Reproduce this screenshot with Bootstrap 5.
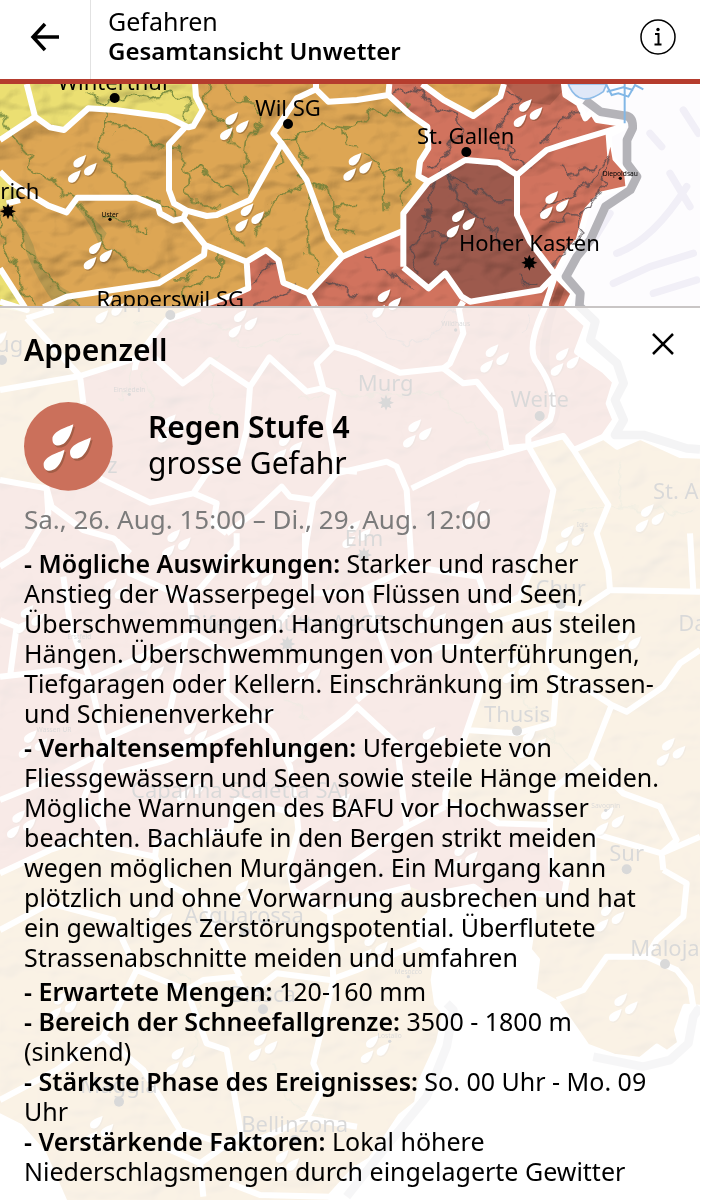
<!DOCTYPE html>
<html lang="de">
<head>
<meta charset="utf-8">
<meta name="viewport" content="width=device-width, initial-scale=1">
<title>Gesamtansicht Unwetter</title>
<link href="https://cdn.jsdelivr.net/npm/bootstrap@5.3.0/dist/css/bootstrap.min.css" rel="stylesheet">
<style>
  body { font-family: "Noto Sans", "Open Sans", sans-serif; color: #000; background: #fff; font-size: 25px; line-height: 30px; }
  .app { margin-right: 13px; }
  .app-head { height: 84px; border-bottom: 5px solid #b53c2e; background: #fff; }
  .back { width: 91px; border-right: 1px solid #e2e2e2 !important; padding-bottom: 5px !important; }
  .head-title { padding: 6px 0 0 17px; }
  .head-title .strong-text { font-size: 24px; }
  .strong-text { font-weight: 600; }
  .icon-btn { background: none; border: 0; border-radius: 0; color: #000; padding: 0; line-height: 1; }
  .info { margin-right: 24px; padding-bottom: 5px; }
  .map { top: 0; left: 0; }
  .sheet { margin-top: 222px; padding: 21px 24px 0; background: rgba(255,255,255,.85); border-top: 2px solid #c9c5c5; }
  .sheet-title { font-size: 30px; line-height: 42px; font-weight: 600; margin: 0; }
  .level { margin-top: 31px; gap: 35px; }
  .level-icon { width: 89px; height: 89px; flex: none; }
  .level-text { font-size: 30px; line-height: 36px; padding-top: 7px; }
  .period { color: #7b7b7b; font-size: 26px; margin: 13px 0 14px; }
  .facts p { margin: 0; }
  .facts .long { margin-bottom: 4px; }
</style>
</head>
<body>
<div class="app d-flex flex-column min-vh-100">
  <header class="app-head d-flex align-items-stretch">
    <button class="back icon-btn d-flex align-items-center justify-content-center" type="button" aria-label="Zurück">
      <svg width="30" height="30" viewBox="0 0 30 30" fill="none" stroke="#000" stroke-width="3.500"><path d="M29 15H3M15 2L3 15l12 13"/></svg>
    </button>
    <div class="head-title flex-grow-1">
      <div>Gefahren</div>
      <div class="strong-text">Gesamtansicht Unwetter</div>
    </div>
    <button class="info icon-btn align-self-center" type="button" aria-label="Information">
      <svg width="36" height="36" viewBox="0 0 36 36" fill="none" stroke="#000"><circle cx="18" cy="18" r="17" stroke-width="1.500"/><path d="M15 15h3.500v10M14.500 25.500h7" stroke-width="2"/><circle cx="18" cy="10.500" r="1.700" fill="#000" stroke="none"/></svg>
    </button>
  </header>

  <main class="position-relative flex-grow-1 d-flex flex-column overflow-hidden">
    <svg class="map position-absolute w-100 h-100" viewBox="0 252 2100 3348" preserveAspectRatio="xMinYMin slice" aria-label="Karte der Unwettergefahren">
      <defs>
        <path id="drop" d="M0 0C-10 5-38 12-38 27C-38 42-22 40-15 33C-6 25-2 10 0 0Z"/>
        <g id="rain"><g fill="#5a3a20" opacity=".35"><use href="#drop" x="3" y="4"/><use href="#drop" x="35" y="28"/><use href="#drop" x="-13" y="50"/></g><g fill="#fff"><use href="#drop"/><use href="#drop" x="32" y="24"/><use href="#drop" x="-16" y="46"/></g></g>
        <path id="star" d="M0-24L5-12 16-17 12-5 24 0 12 5 16 17 5 12 0 24-5 12-16 17-12 5-24 0-12-5-16-17-5-12Z"/>
        <filter id="relief" x="0" y="0" width="100%" height="100%">
          <feTurbulence type="fractalNoise" baseFrequency="0.006 0.009" numOctaves="3" seed="8"/>
          <feDiffuseLighting surfaceScale="45" lighting-color="#fff" diffuseConstant="1.25"><feDistantLight azimuth="225" elevation="54"/></feDiffuseLighting>
        </filter>
        <filter id="meander" filterUnits="userSpaceOnUse" x="0" y="252" width="2100" height="3348">
          <feTurbulence type="fractalNoise" baseFrequency="0.025" numOctaves="2" seed="4"/>
          <feDisplacementMap in="SourceGraphic" scale="50" xChannelSelector="R" yChannelSelector="G"/>
        </filter>
      </defs>

      <!-- warning areas: level 3, 4, 2 and 5 -->
      <rect y="252" width="2100" height="3348" fill="#dda654"/>
      <path fill="#d1735e" d="M1171 252L1175 290 1285 380 1290 440 1250 530 1290 545 1210 640 1205 690 1027 770 925 880 850 850 835 775 795 750 740 785 745 865 600 918 500 950 430 1040 405 1075 240 1125 250 1210V1320L140 1460 0 1440V2610L150 2550 300 2500 320 2550 465 2570 470 2530 690 2490 700 2400 890 2440 900 2480 865 2610 875 2665 980 2740 1071 2700 1231 2660 1291 2685 1421 2660 1511 2740 1571 2680 1691 2690 1711 2650 1671 2630 1651 2480 1491 2470 1336 2420V2380L1401 2190 1456 2050 1411 1940 1471 1850V1830L1561 1790 1631 1620 1661 1470 1581 1340 1681 1310 1721 1350 1811 1310 2100 1310V252Z"/>
      <path fill="#dda654" d="M1266 252L1331 300 1421 350 1501 290 1516 252Z"/>
      <path fill="#b5624f" d="M1516 252L1565 305 1650 315 1690 270V252ZM1650 920L1680 840 1700 850 1670 930Q1620 1080 1680 1200 1690 1280 1620 1310L1600 1310Q1660 1260 1650 1200 1590 1080 1650 920Z"/>
      <path fill="#ebdf72" d="M0 252V420L105 350 190 390 265 325 500 350 565 380 610 330 580 252ZM0 520L60 560 50 600 0 630ZM0 805L90 940 0 925Z"/>
      <path fill="#9d5a4d" d="M1396 480L1495 488 1551 525V645L1590 730 1666 825 1620 875 1410 905 1385 890 1336 820 1286 865 1210 805V640L1280 545Z"/>
      <path fill="#b99a50" d="M225 615Q285 650 320 700L300 740Q280 680 225 615ZM40 640Q95 700 110 770 140 850 240 890L200 920H170Q110 840 80 760 70 700 40 640Z"/>

      <rect y="252" width="2100" height="3348" filter="url(#relief)" opacity=".4" style="mix-blend-mode:multiply"/>

      <!-- land outside the warning regions -->
      <g fill="#fdfcfe" stroke="#fff" stroke-width="18" stroke-linejoin="round">
        <path d="M1691 245L1696 285 1736 310 1756 355 1776 335 1791 360 1871 372 1866 385 1826 405 1831 470 1871 510 1876 560 1806 580 1761 630 1736 720 1701 760 1666 825 1721 880 1701 920 1761 975 1731 1055 1811 1110 1846 1145 1826 1210 1846 1260 1811 1310 1851 1340 1921 1310 2041 1365 2120 1368V245Z"/>
        <path d="M2120 3025L2056 3020 2031 3090 2041 3130 2001 3160 1971 3140 1921 3180 1841 3170 1761 3140 1671 3010 1601 2970 1611 2880 1586 2850 1601 2750 1596 2680 1511 2740 1456 2685 1421 2660 1291 2685V2740L1251 2780 1261 2830 1311 2870 1301 2940 1311 3010 1336 3040 1316 3130 1261 3250 1251 3310 1201 3350 1141 3440 1111 3480 1071 3505 980 3620H2120ZM-20 3340L60 3380 130 3460 200 3620H-20Z"/>
      </g>
      <g fill="none" stroke="#f1eff7" stroke-width="22" stroke-linecap="round">
        <path d="M1950 400L1985 440M2010 520L2070 620M1850 760Q1960 720 2060 560M1840 850L1950 800 2080 760M1960 880L2090 840M2050 330L2095 400M1780 720L1830 640"/>
      </g>
      <path fill="#d1735e" d="M1831 440L1838 480 1872 518 1876 558 1800 575Z"/>
      <g fill="none" stroke="#b4b3b8" stroke-width="26" stroke-linejoin="round">
        <path d="M1755 300L1801 335 1875 347Q1900 350 1898 385L1881 420V490L1911 530 1891 570 1816 620 1771 720 1731 770 1698 830 1741 880 1738 918 1786 965 1771 1020 1851 1090 1871 1150 1845 1200 1871 1260 1845 1305 1931 1305 2060 1345 2100 1348"/>
        <path d="M2100 3020L2080 3050 2065 3130 2010 3180 1930 3200 1780 3170M1340 3010L1360 3030 1340 3140 1280 3290 1150 3450 1040 3590" stroke-opacity=".8"/>
      </g>
      <path fill="#dfe8f8" stroke="#8dbce8" stroke-width="5" d="M1708 260Q1740 325 1810 275L1820 252H1705Z"/>
      <path fill="none" stroke="#82b7e6" stroke-width="6" d="M1874 252V370M1818 252L1835 285 1855 280 1885 290 1905 255 1930 268M1820 275L1870 262 1900 270"/>

      <!-- rivers -->
      <g filter="url(#meander)" fill="none" stroke-linejoin="round" stroke-width="4">
      <g stroke="#5f7a35">
        <path d="M0 340L30 400 95 470 85 510 165 540 190 580 230 600 270 650 305 720 370 770 410 815 440 820 475 835M315 330L310 370 302 450 345 530 400 580 500 610 530 640M312 370L340 375 350 395 385 380 430 400 450 430 500 440M40 640L75 740 130 810 180 870 245 918M0 650L15 740 50 800 70 880 100 918M305 655L380 665 430 710 445 710 430 675M270 275L310 310 345 300 380 285 460 295 510 280 565 300 555 365M630 252L615 310 650 350 690 375 685 430 725 445M675 252L710 300 770 305 775 360 745 430 735 510 750 590M520 440L550 480 565 540 555 570 575 600 650 620M565 510L600 505 630 530 690 560 700 580M845 420L900 400 975 375 1050 385 1071 375M890 400L895 440 915 480 900 520 930 560 920 680 925 760 965 825M765 700L800 640 820 585 870 580 920 540M845 450L850 490 830 515M660 750L660 820 600 850 550 860 545 918M520 840L560 840 590 815M680 650L710 700 725 740M1071 375L1120 330 1190 350 1230 300M1030 385L1045 430 1071 445M935 550L990 570 1000 620 1071 610M1000 620L1010 690 1071 705M1090 460L1145 500 1150 640M1145 510L1210 520 1230 560 1205 600"/>
        <path d="M410 960Q480 990 520 970T640 970 700 1030 900 1000M370 1100Q420 1040 360 1200M430 1110L460 1220M640 1060L630 1230 700 1320M900 1200L1000 1170 1120 1190 1310 1180 1490 1350M1710 1540L1850 1520 2080 1540M1870 1380L1860 1530M1000 1750L880 1900 820 2040 920 2160M1480 1890L1540 2050 1650 2200 1740 2300M520 2900L600 2980 580 3180M820 3200L880 3310 980 3360" opacity=".55"/>
      </g>
      <g stroke="#50474c">
        <path d="M1171 285L1200 265 1270 280 1300 320 1370 350 1380 400 1320 480 1290 500M1480 400L1530 330 1560 300 1520 270M1480 400L1540 470 1600 505M1625 430L1670 380 1690 345 1750 335M1340 520L1380 550 1440 570 1470 600 1540 600M1325 500L1290 570 1275 690 1235 770 1250 825M1345 520L1370 600 1440 650 1490 700 1520 740M1275 705L1340 710 1310 760 1320 790M1820 480L1750 570 1620 640M1830 470L1800 570 1740 640 1735 710 1650 800M1680 490L1700 530 1780 500M1640 670L1700 645 1740 650M1095 760L1110 780 1170 820 1250 865M975 840L1020 870 1071 880M765 850L800 800 830 780M760 920L840 890 900 850M1560 830L1590 860 1620 860"/>
        <path d="M1100 940Q1150 1020 1220 1030T1370 920M1570 1000L1590 930" opacity=".5"/>
      </g>
      </g>

      <!-- region borders -->
      <g fill="none" stroke="#fff" stroke-width="18" stroke-linejoin="round">
        <path d="M80 252L105 350 0 420M105 350L150 382 192 390 265 325 345 330 500 350 565 382 580 378 608 330 588 290 585 252M555 382L507 433V570L522 610 560 632 620 648 650 645 750 600 845 430 820 400 890 295 948 268 985 305 1071 300 1165 285 1168 252M948 252V268M845 430L920 540 985 715 1027 770M0 515L30 545 100 590 145 617 200 637 232 593H410L475 620 480 640 520 662 550 655 560 632M550 655L615 735 612 765 475 850 200 890 130 922M615 735L740 785 745 865 700 885 600 918M740 785L798 750 835 780 850 848 925 880 945 918M925 880L1027 770 1071 750 1210 692M0 805L80 930 0 905M20 610L60 600"/>
        <path d="M1165 285L1225 340 1282 380 1285 445 1260 485 1255 528 1285 545M1266 252L1331 300 1420 348 1501 290 1512 252M1210 800V640L1285 545 1396 480 1495 488 1551 525 1640 450 1700 430 1860 382M1551 525V645L1590 725 1666 825 1622 870 1410 905 1385 890 1336 820 1286 865 1210 802M1390 905L1375 930M1635 918L1666 825"/>
        <path d="M0 1170L240 1128 405 1075M80 955L240 1128 250 1210M80 955L160 930M405 1110Q400 1075 500 960L600 925M460 1070L548 1150 590 1120 630 1080 750 1160 808 1072 920 1175 965 1165 1000 1180 985 1270 1010 1410 1071 1415M945 918L1000 1040 1071 1060 1200 1118 1330 1105M1000 1040L950 1090 970 1165M750 1160L740 1290 720 1370 620 1420 580 1480 650 1510 640 1570 680 1600M300 1435L450 1508 580 1480M0 1440L140 1465 155 1520 250 1590 340 1615 390 1660M140 1465L145 1540 80 1650 0 1700M680 1600L760 1540 845 1460 870 1490 940 1500 1010 1420 1160 1385 1190 1400 1220 1470 1235 1700M710 1600V1650M915 1600V1700M940 1500L915 1650"/>
        <path d="M1375 918L1390 1000 1350 1090 1330 1105 1390 1150 1430 1145 1500 1230 1520 1345 1585 1338 1660 1470 1630 1620 1560 1790 1471 1830 1436 1730 1235 1700M1640 910Q1580 1030 1605 1080 1680 1180 1650 1260L1585 1310 1585 1338 1690 1308 1721 1350 1811 1310M1721 1350L1825 1515 1790 1600 1825 1710 1830 1770 2100 1775M1235 1465L1400 1385 1490 1365 1585 1338M2070 1600L2080 1775M1830 1770L1740 1830 1650 1820 1471 1870 1411 1940 1456 2030 1401 2190 1550 2200 1660 2170 1670 2040 1645 1980 1655 1820M1401 2190L1336 2380V2410L1430 2430 1495 2470 1650 2475 1655 2620M1411 1940L1320 1940 1180 2010 1071 2100M1180 2010L1090 1770 1235 1700M1655 2000L1835 2115 1880 2135 1990 2060 2040 1990 2100 1950M1835 2115L1770 2280 1655 2370 1650 2475M1770 2280L1870 2380 1980 2420 2030 2520 1985 2560 1780 2500 1780 2620M1985 2560L2100 2510M1985 2560L1990 2610"/>
        <path d="M350 1620L390 1720 570 1800 580 1900 270 2040 310 2210 340 2240 170 2330 0 2400M0 2030L180 2010 270 2040M30 2030L50 1880 0 1860M190 1730L210 1870 270 2040M570 1800L710 1640M915 1650V1780L1071 1780M580 1900L680 1960 800 1910 880 1820M560 1900L510 2130 320 2215 250 2400 310 2480 320 2540 465 2570 470 2530 690 2490 710 2400 890 2440 895 2490 865 2600M680 1960V2080L820 2200 870 2300 890 2440M820 2130L500 2280 350 2320M870 2280L1040 2150 1071 2120 1190 2230 1220 2480 1071 2580 910 2680M0 2620L150 2550 300 2500M340 2230L300 2290 310 2500M1220 2480L1336 2420"/>
        <path d="M0 2790L150 2710 340 2760 410 2910 310 3110 170 3210 0 3300M410 2910L560 2970 610 2940 710 2930 740 2990 830 2920 990 2940 1071 2910 1260 2830M465 2570L500 2650 610 2710 720 2930M865 2600L880 2670 990 2740 1000 2940 940 3190 970 3260 920 3355 730 3440 680 3150 620 3130 560 2970M990 2740L1071 2700 1231 2660M310 3110L430 3210 540 3390 490 3440 600 3490 730 3400M540 3390L730 3450M600 3490L610 3590M690 3550L780 3585 990 3590 1071 3500M920 3355L1071 3380M1655 2620L1700 2640 1691 2690 1596 2680M1990 2610L2060 2650 2050 2750 1970 2820 1940 2870 1820 2870 1750 2970 1671 3000M1940 2870L2030 2910 2070 2960 2080 3020"/>
      </g>

      <g>
        <use href="#rain" x="714" y="336"/><use href="#rain" x="258" y="464"/><use href="#rain" x="305" y="724"/><use href="#rain" x="760" y="610"/><use href="#rain" x="1084" y="458"/><use href="#rain" x="1595" y="297"/><use href="#rain" x="1674" y="573"/><use href="#rain" x="1394" y="628"/><use href="#rain" x="1171" y="868"/>
        <use href="#rain" x="340" y="885"/><use href="#rain" x="740" y="928"/><use href="#rain" x="527" y="1243"/><use href="#rain" x="875" y="1300"/><use href="#rain" x="540" y="1588"/><use href="#rain" x="-12" y="970"/><use href="#rain" x="1495" y="1033"/><use href="#rain" x="1706" y="1043"/><use href="#rain" x="1263" y="1258"/><use href="#rain" x="1439" y="1502"/><use href="#rain" x="1961" y="1512"/><use href="#rain" x="1721" y="1575"/><use href="#rain" x="1081" y="1560"/>
        <use href="#rain" x="790" y="1695"/><use href="#rain" x="350" y="1735"/><use href="#rain" x="100" y="1815"/><use href="#rain" x="460" y="1975"/><use href="#rain" x="930" y="1980"/><use href="#rain" x="590" y="2165"/><use href="#rain" x="110" y="2190"/><use href="#rain" x="585" y="2320"/><use href="#rain" x="75" y="2430"/><use href="#rain" x="1050" y="2380"/><use href="#rain" x="1306" y="1815"/><use href="#rain" x="1891" y="1885"/><use href="#rain" x="1561" y="1965"/><use href="#rain" x="1306" y="2180"/><use href="#rain" x="1606" y="2190"/><use href="#rain" x="2024" y="2213"/><use href="#rain" x="1841" y="2420"/><use href="#rain" x="1401" y="2530"/>
        <use href="#rain" x="745" y="2640"/><use href="#rain" x="485" y="2715"/><use href="#rain" x="200" y="2975"/><use href="#rain" x="553" y="3140"/><use href="#rain" x="800" y="3098"/><use href="#rain" x="308" y="3347"/><use href="#rain" x="865" y="3450"/><use href="#rain" x="1841" y="2710"/><use href="#rain" x="1131" y="2800"/><use href="#rain" x="1881" y="2980"/><use href="#rain" x="1136" y="3105"/>
      </g>

      <!-- places -->
      <g>
        <circle cx="344" cy="294" r="15"/><circle cx="864" cy="372" r="15"/><circle cx="1399" cy="456" r="15"/><circle cx="511" cy="945" r="15"/><circle cx="6" cy="1080" r="15"/><circle cx="1619" cy="1248" r="15"/><circle cx="1682" cy="1812" r="15"/><circle cx="1551" cy="2192" r="15"/><circle cx="1880" cy="2608" r="15"/><circle cx="1995" cy="2892" r="15"/><circle cx="789" cy="3028" r="15"/><circle cx="357" cy="3305" r="15"/><circle cx="884" cy="3420" r="15"/><circle cx="735" cy="2795" r="15"/>
        <circle cx="330" cy="658" r="5"/><circle cx="1861" cy="535" r="5"/><circle cx="1367" cy="990" r="5"/><circle cx="388" cy="1183" r="5"/><circle cx="1747" cy="1590" r="5"/><circle cx="238" cy="1924" r="5"/><circle cx="1817" cy="2431" r="5"/><circle cx="1225" cy="2930" r="5"/><circle cx="1169" cy="3124" r="5"/>
        <use href="#star" x="24" y="634"/><use href="#star" x="1588" y="788"/><use href="#star" x="1158" y="1208"/><use href="#star" x="1092" y="1665"/><use href="#star" x="862" y="1932"/>
      </g>
      <g font-size="66" text-anchor="middle">
        <text x="343" y="269">Winterthur</text><text x="864" y="347">Wil SG</text><text x="1397" y="433">St. Gallen</text><text x="20" y="597">Zürich</text><text x="1588" y="752">Hoher Kasten</text><text x="511" y="920">Rapperswil SG</text>
        <text x="10" y="1055">Zug</text><text x="1157" y="1173">Murg</text><text x="1619" y="1222">Weite</text><text x="2100" y="1498">St. Anton</text><text x="1092" y="1637">Elm</text><text x="240" y="1418">Schwyz</text><text x="1682" y="1787">Chur</text><text x="862" y="1892">Bifertenhütte AACB</text><text x="2130" y="1892">Davos</text><text x="1551" y="2167">Thusis</text><text x="725" y="2393">Capanna Scaletta SAT</text><text x="1880" y="2582">Sur</text><text x="732" y="2770">Acquarossa</text><text x="1995" y="2868">Maloja</text><text x="789" y="3006">Biasca</text><text x="357" y="3280">Maggia</text><text x="884" y="3395">Bellinzona</text>
      </g>
      <g font-size="20" text-anchor="middle">
        <text x="330" y="650">Uster</text><text x="1861" y="527">Diepoldsau</text><text x="1367" y="978">Wildhaus</text><text x="388" y="1177">Einsiedeln</text><text x="1747" y="1582">Igis</text><text x="238" y="1917">Erstfeld</text><text x="162" y="2197">Wassen UR</text><text x="1817" y="2423">Savognin</text><text x="1225" y="2921">Mesocco</text><text x="1169" y="3115">Lostallo</text>
      </g>
    </svg>

    <section class="sheet position-relative flex-grow-1" aria-labelledby="region">
      <div class="d-flex justify-content-between align-items-start">
        <h1 class="sheet-title" id="region">Appenzell</h1>
        <button class="icon-btn" type="button" aria-label="Schliessen">
          <svg width="26" height="26" viewBox="0 0 26 26" stroke="#000" stroke-width="2.500"><path d="M3 3L23 23M23 3L3 23"/></svg>
        </button>
      </div>
      <div class="level d-flex">
        <svg class="level-icon" viewBox="0 0 267 267" aria-hidden="true"><circle cx="133" cy="133" r="133" fill="#cb705b"/><use href="#rain" transform="translate(148 67) scale(1.650)"/></svg>
        <div class="level-text">
          <div class="strong-text">Regen Stufe 4</div>
          <div>grosse Gefahr</div>
        </div>
      </div>
      <p class="period">Sa., 26. Aug. 15:00 – Di., 29. Aug. 12:00</p>
      <div class="facts text-nowrap">
        <p class="long"><span class="strong-text">- Mögliche Auswirkungen:</span> Starker und rascher<br>Anstieg der Wasserpegel von Flüssen und Seen,<br>Überschwemmungen. Hangrutschungen aus steilen<br>Hängen. Überschwemmungen von Unterführungen,<br>Tiefgaragen oder Kellern. Einschränkung im Strassen-<br>und Schienenverkehr</p>
        <p class="long"><span class="strong-text">- Verhaltensempfehlungen:</span> Ufergebiete von<br>Fliessgewässern und Seen sowie steile Hänge meiden.<br>Mögliche Warnungen des BAFU vor Hochwasser<br>beachten. Bachläufe in den Bergen strikt meiden<br>wegen möglichen Murgängen. Ein Murgang kann<br>plötzlich und ohne Vorwarnung ausbrechen und hat<br>ein gewaltiges Zerstörungspotential. Überflutete<br>Strassenabschnitte meiden und umfahren</p>
        <p><span class="strong-text">- Erwartete Mengen:</span> 120-160 mm</p>
        <p><span class="strong-text">- Bereich der Schneefallgrenze:</span> 3500 - 1800 m<br>(sinkend)</p>
        <p><span class="strong-text">- Stärkste Phase des Ereignisses:</span> So. 00 Uhr - Mo. 09<br>Uhr</p>
        <p><span class="strong-text">- Verstärkende Faktoren:</span> Lokal höhere<br>Niederschlagsmengen durch eingelagerte Gewitter</p>
      </div>
    </section>
  </main>
</div>
<script src="https://cdn.jsdelivr.net/npm/bootstrap@5.3.0/dist/js/bootstrap.bundle.min.js"></script>
</body>
</html>
